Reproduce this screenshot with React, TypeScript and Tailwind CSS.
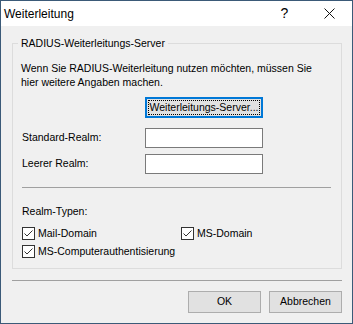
import React from 'react';

function CheckBox({ label }: { label: string }) {
  return (
    <label className="flex items-center gap-[3px] h-[13px]">
      <span className="w-[13px] h-[13px] border border-[#333333] bg-white flex items-center justify-center">
        <svg width="11" height="11" viewBox="0 0 11 11">
          <path d="M1.5 5.5 L4 8 L9.5 2.5" fill="none" stroke="#333333" strokeWidth="1" />
        </svg>
      </span>
      <span className="leading-[13px]">{label}</span>
    </label>
  );
}

export default function App() {
  return (
    <div className="w-[353px] h-[324px] border border-[#3b5a78] bg-[#f0f0f0] flex flex-col font-['Liberation_Sans',Arial,sans-serif] text-[10.5px] text-black overflow-hidden">
      {/* title bar */}
      <div className="h-[25px] bg-white flex items-center shrink-0">
        <span className="pl-[3px] text-[12px] flex-1">Weiterleitung</span>
        <div className="w-[45px] h-full flex items-center justify-center text-[14px]">?</div>
        <div className="w-[45px] h-full flex items-center justify-center">
          <svg width="11" height="11" viewBox="0 0 11 11">
            <path d="M0.5 0.5 L10.5 10.5 M10.5 0.5 L0.5 10.5" stroke="#111" strokeWidth="1" />
          </svg>
        </div>
      </div>

      <div className="px-[11px] flex flex-col">
        <fieldset className="mt-[11px] w-[330px] border border-[#dcdcdc] pl-[5px] pr-0 pb-[10px]">
          <legend className="px-[3px] leading-[13px] whitespace-nowrap">RADIUS-Weiterleitungs-Server</legend>

          <p className="mt-[11px] ml-[3px] leading-[14px] whitespace-nowrap">
            Wenn Sie RADIUS-Weiterleitung nutzen möchten, müssen Sie
            <br />
            hier weitere Angaben machen.
          </p>

          <div className="mt-[8px] pl-[127px]">
            <button className="w-[118px] h-[21px] border-2 border-[#0078d7] bg-[#e1e1e1] p-[1px] whitespace-nowrap">
              <span className="block h-full border border-dotted border-black leading-[13px]">
                Weiterleitungs-Server...
              </span>
            </button>
          </div>

          <div className="mt-[10px] flex items-center ml-[4px]">
            <span className="w-[123px]">Standard-Realm:</span>
            <input className="w-[118px] h-[20px] border border-[#7a7a7a] bg-white outline-none" />
          </div>
          <div className="mt-[6px] flex items-center ml-[4px]">
            <span className="w-[123px]">Leerer Realm:</span>
            <input className="w-[118px] h-[20px] border border-[#7a7a7a] bg-white outline-none" />
          </div>

          <div className="mt-[13px] ml-[4px] mr-[10px] h-px bg-[#a0a0a0]" />

          <div className="mt-[16px] ml-[4px] leading-[14px]">Realm-Typen:</div>

          <div className="mt-[9px] ml-[4px] flex flex-col gap-[5px]">
            <div className="flex">
              <div className="w-[159px]">
                <CheckBox label="Mail-Domain" />
              </div>
              <CheckBox label="MS-Domain" />
            </div>
            <CheckBox label="MS-Computerauthentisierung" />
          </div>
        </fieldset>

        <div className="mt-[11px] w-[330px] h-px bg-[#a0a0a0]" />

        <div className="mt-[10px] flex justify-end gap-[8px] w-[330px]">
          <button className="w-[73px] h-[22px] border border-[#adadad] bg-[#e1e1e1]">OK</button>
          <button className="w-[73px] h-[22px] border border-[#adadad] bg-[#e1e1e1]">Abbrechen</button>
        </div>
      </div>
    </div>
  );
}
